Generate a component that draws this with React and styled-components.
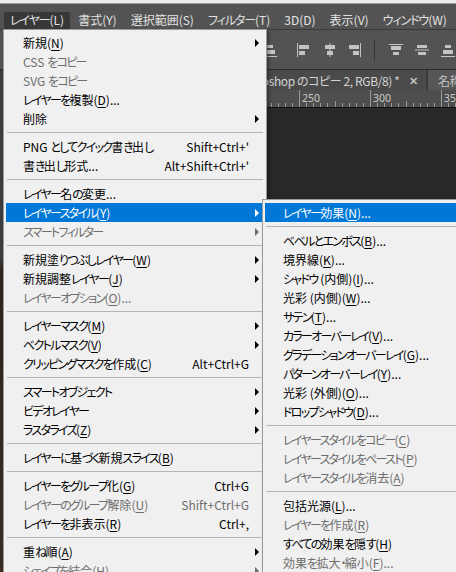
import React from 'react';
import styled, { createGlobalStyle } from 'styled-components';

const GlobalStyle = createGlobalStyle`
  html, body {
    margin: 0;
    padding: 0;
    background: #282828;
    overflow: hidden;
  }
  * { box-sizing: border-box; }
`;

const UI_FONT = `"Noto Sans CJK JP", "Noto Sans", sans-serif`;

const Window = styled.div`
  position: relative;
  width: 456px;
  height: 572px;
  overflow: hidden;
  display: flex;
  flex-direction: column;
  background: #282828;
  font-family: ${UI_FONT};
  font-feature-settings: "palt" 1;
`;

const TopStrip = styled.div`
  height: 4px;
  flex: none;
  background: #ececec;
  border-bottom: 1px solid #9a9a9a;
`;

const MenuBar = styled.div`
  height: 25px;
  flex: none;
  display: flex;
  align-items: flex-end;
  gap: 2px;
  padding-left: 4px;
  background: #535353;
`;

const MenuBarItem = styled.div`
  height: 17px;
  padding: 0 6px;
  font-size: 12px;
  line-height: 16px;
  color: #e2e2e2;
  white-space: nowrap;
  border-radius: 2px 2px 0 0;
  background: ${({ $open }) => ($open ? '#383838' : 'transparent')};
`;

/* Meiryo UI kana are narrower than Noto's, so kana runs get squeezed */
const Kana = styled.span`
  letter-spacing: ${({ $ls }) => $ls}px;
`;

const OptionsBar = styled.div`
  height: 41px;
  flex: none;
  display: flex;
  align-items: center;
  padding-left: 262px;
  background: #535353;
  border-top: 1px solid #3a3a3a;
  border-bottom: 1px solid #2c2c2c;
`;

const ToolIcon = styled.div`
  width: 16px;
  height: 16px;
  margin-right: ${({ $gap }) => $gap}px;
  display: flex;
  color: #c4c4c4;
`;

const BarDivider = styled.div`
  width: 1px;
  height: 22px;
  margin-right: 13px;
  background: #343434;
`;

const Work = styled.div`
  flex: 1;
  display: flex;
  min-height: 0;
`;

const ToolStrip = styled.div`
  width: 3px;
  flex: none;
  background: linear-gradient(#3c3c3c 0, #3c3c3c 190px, #2d2520 200px, #3a2c22 100%);
`;

const DocArea = styled.div`
  flex: 1;
  display: flex;
  flex-direction: column;
  min-width: 0;
`;

const TabBar = styled.div`
  height: 20px;
  flex: none;
  display: flex;
  background: #3a3a3a;
`;

const Tab = styled.div`
  height: 20px;
  display: flex;
  align-items: center;
  justify-content: ${({ $end }) => ($end ? 'flex-end' : 'flex-start')};
  flex: ${({ $width }) => ($width ? `0 0 ${$width}px` : '1')};
  padding: ${({ $end }) => ($end ? '0 8px 0 10px' : '0 10px')};
  margin-right: ${({ $end }) => ($end ? '2px' : '0')};
  overflow: hidden;
  white-space: nowrap;
  font-size: 12px;
  letter-spacing: -0.4px;
  color: ${({ $active }) => ($active ? '#d4d4d4' : '#c2c2c2')};
  background: ${({ $active }) => ($active ? '#4a4a4a' : '#565656')};
`;

const TabClose = styled.span`
  margin-left: 10px;
  font-size: 11px;
  font-weight: 700;
  color: #bdbdbd;
  flex: none;
`;

const RulerBox = styled.div`
  height: 18px;
  flex: none;
  background: #4e4e4e;
  border-bottom: 1px solid #141414;
  display: flex;
`;

const Canvas = styled.div`
  flex: 1;
  background: #282828;
`;

const Menu = styled.div`
  position: absolute;
  left: ${({ $x }) => $x}px;
  top: ${({ $y }) => $y}px;
  width: ${({ $w }) => $w}px;
  padding: 3px 2px;
  background: #f0f0f0;
  border: 1px solid #9b9b9b;
  box-shadow: 2px 2px 3px rgba(0, 0, 0, 0.35);
  font-size: 12px;
`;

const Item = styled.div`
  height: 19px;
  display: flex;
  align-items: center;
  padding-left: ${({ $indent }) => $indent}px;
  white-space: nowrap;
  color: ${({ $active, $disabled }) => ($active ? '#ffffff' : $disabled ? '#6d6d6d' : '#000000')};
  background: ${({ $active }) => ($active ? '#0078d7' : 'transparent')};
`;

const Label = styled.span`
  flex: 1;
  line-height: 19px;

  u {
    text-decoration-thickness: 1px;
    text-underline-offset: 2px;
  }
`;

const Shortcut = styled.span`
  line-height: 19px;
`;

const ArrowCell = styled.span`
  width: 15px;
  flex: none;
  display: flex;
  justify-content: center;
`;

const Arrow = styled.span`
  width: 0;
  height: 0;
  border-top: 4px solid transparent;
  border-bottom: 4px solid transparent;
  border-left: 4px solid currentColor;
`;

const Separator = styled.div`
  height: 9px;
  display: flex;
  align-items: center;
  padding: 0 1px;

  &::after {
    content: '';
    flex: 1;
    height: 1px;
    background: #b4b4b4;
  }
`;

const mainItems = [
  { t: '新規(&N)', sub: true },
  { t: 'CSS をコピー', dis: true },
  { t: 'SVG をコピー', dis: true },
  { t: 'レイヤーを複製(&D)...' },
  { t: '削除', sub: true },
  '-',
  { t: 'PNG としてクイック書き出し', k: "Shift+Ctrl+'" },
  { t: '書き出し形式...', k: "Alt+Shift+Ctrl+'" },
  '-',
  { t: 'レイヤー名の変更...' },
  { t: 'レイヤースタイル(&Y)', sub: true, active: true },
  { t: 'スマートフィルター', sub: true, dis: true },
  '-',
  { t: '新規塗りつぶしレイヤー(&W)', sub: true },
  { t: '新規調整レイヤー(&J)', sub: true },
  { t: 'レイヤーオプション(&O)...', dis: true },
  '-',
  { t: 'レイヤーマスク(&M)', sub: true },
  { t: 'ベクトルマスク(&V)', sub: true },
  { t: 'クリッピングマスクを作成(&C)', k: 'Alt+Ctrl+G' },
  '-',
  { t: 'スマートオブジェクト', sub: true },
  { t: 'ビデオレイヤー', sub: true },
  { t: 'ラスタライズ(&Z)', sub: true },
  '-',
  { t: 'レイヤーに基づく新規スライス(&B)' },
  '-',
  { t: 'レイヤーをグループ化(&G)', k: 'Ctrl+G' },
  { t: 'レイヤーのグループ解除(&U)', k: 'Shift+Ctrl+G', dis: true },
  { t: 'レイヤーを非表示(&R)', k: 'Ctrl+,' },
  '-',
  { t: '重ね順(&A)', sub: true },
  { t: 'シェイプを結合(&H)', sub: true, dis: true },
];

const styleItems = [
  { t: 'レイヤー効果(&N)...', active: true },
  '-',
  { t: 'ベベルとエンボス(&B)...' },
  { t: '境界線(&K)...' },
  { t: 'シャドウ (内側)(&I)...' },
  { t: '光彩 (内側)(&W)...' },
  { t: 'サテン(&T)...' },
  { t: 'カラーオーバーレイ(&V)...' },
  { t: 'グラデーションオーバーレイ(&G)...' },
  { t: 'パターンオーバーレイ(&Y)...' },
  { t: '光彩 (外側)(&O)...' },
  { t: 'ドロップシャドウ(&D)...' },
  '-',
  { t: 'レイヤースタイルをコピー(&C)', dis: true },
  { t: 'レイヤースタイルをペースト(&P)', dis: true },
  { t: 'レイヤースタイルを消去(&A)', dis: true },
  '-',
  { t: '包括光源(&L)...' },
  { t: 'レイヤーを作成(&R)', dis: true },
  { t: 'すべての効果を隠す(&H)' },
  { t: '効果を拡大・縮小(&F)...', dis: true },
];

const JP = ({ text, ls = -1.7 }) =>
  text
    .split(/([\u3040-\u30ff]+)/)
    .map((part, i) =>
      /[\u3040-\u30ff]/.test(part) ? (
        <Kana key={i} $ls={ls}>
          {part}
        </Kana>
      ) : (
        part
      )
    );

// "&X" marks the mnemonic letter
const Mnemonic = ({ text }) => {
  const i = text.indexOf('&');
  if (i < 0) return <JP text={text} />;
  return (
    <>
      <JP text={text.slice(0, i)} />
      <u>{text[i + 1]}</u>
      {text.slice(i + 2)}
    </>
  );
};

const MenuList = ({ items, x, y, w, indent }) => (
  <Menu $x={x} $y={y} $w={w}>
    {items.map((it, i) =>
      it === '-' ? (
        <Separator key={i} />
      ) : (
        <Item key={i} $indent={indent} $active={it.active} $disabled={it.dis}>
          <Label>
            <Mnemonic text={it.t} />
          </Label>
          {it.k && <Shortcut>{it.k}</Shortcut>}
          <ArrowCell>{it.sub && <Arrow />}</ArrowCell>
        </Item>
      )
    )}
  </Menu>
);

const AlignIcon = ({ kind }) => {
  const shapes = {
    left: (
      <>
        <rect x="1" y="1" width="1" height="14" />
        <rect x="3" y="3" width="10" height="4" />
        <rect x="3" y="9" width="6" height="4" />
      </>
    ),
    center: (
      <>
        <rect x="7.5" y="1" width="1" height="14" />
        <rect x="3" y="3" width="10" height="4" />
        <rect x="5" y="9" width="6" height="4" />
      </>
    ),
    right: (
      <>
        <rect x="14" y="1" width="1" height="14" />
        <rect x="3" y="3" width="10" height="4" />
        <rect x="7" y="9" width="6" height="4" />
      </>
    ),
    top: (
      <>
        <rect x="1" y="2" width="14" height="1" />
        <rect x="3" y="4" width="10" height="4" />
        <rect x="5" y="10" width="6" height="3" />
      </>
    ),
    middle: (
      <>
        <rect x="1" y="7.5" width="14" height="1" />
        <rect x="3" y="3" width="10" height="3" />
        <rect x="4" y="10" width="8" height="3" />
      </>
    ),
    bottom: (
      <>
        <rect x="1" y="14" width="14" height="1" />
        <rect x="5" y="3" width="6" height="3" />
        <rect x="3" y="8" width="10" height="4" />
      </>
    ),
  };
  return (
    <svg width="16" height="16" viewBox="0 0 16 16" fill="currentColor">
      {shapes[kind]}
    </svg>
  );
};

const Ruler = () => {
  const ticks = [];
  for (let i = 0; i < 70; i++) {
    const x = 12 + i * 7.1;
    const major = i % 10 === 0;
    const mid = i % 5 === 0;
    ticks.push(
      <rect key={i} x={Math.round(x)} y={major ? 0 : mid ? 11 : 13} width="1" height={major ? 17 : mid ? 6 : 4} />
    );
  }
  const labels = [50, 100, 150, 200, 250, 300, 350].map((n, i) => (
    <text key={n} x={12 + i * 71 + 3} y="12" fontSize="10.5" fill="#c8c8c8" fontFamily='"Noto Sans", sans-serif'>
      {n}
    </text>
  ));
  return (
    <svg width="453" height="17" fill="#9a9a9a">
      {ticks}
      {labels}
    </svg>
  );
};

const barMenus = ['レイヤー(L)', '書式(Y)', '選択範囲(S)', 'フィルター(T)', '3D(D)', '表示(V)', 'ウィンドウ(W)'];

export default function App() {
  return (
    <>
      <GlobalStyle />
      <Window>
        <TopStrip />
        <MenuBar>
          {barMenus.map((m, i) => (
            <MenuBarItem key={m} $open={i === 0}>
              <JP text={m} ls={-1.1} />
            </MenuBarItem>
          ))}
        </MenuBar>
        <OptionsBar>
          <ToolIcon $gap={18}><AlignIcon kind="bottom" /></ToolIcon>
          <ToolIcon $gap={10}><AlignIcon kind="left" /></ToolIcon>
          <ToolIcon $gap={8}><AlignIcon kind="center" /></ToolIcon>
          <ToolIcon $gap={12}><AlignIcon kind="right" /></ToolIcon>
          <BarDivider />
          <ToolIcon $gap={10}><AlignIcon kind="top" /></ToolIcon>
          <ToolIcon $gap={10}><AlignIcon kind="middle" /></ToolIcon>
          <ToolIcon $gap={0}><AlignIcon kind="bottom" /></ToolIcon>
        </OptionsBar>
        <Work>
          <ToolStrip />
          <DocArea>
            <TabBar>
              <Tab $active $end $width={423}>
                名称未設定 1 @ 66.7% (Photoshop のコピー 2, RGB/8) *
                <TabClose>✕</TabClose>
              </Tab>
              <Tab>名称未設定 2 @ 66.7%</Tab>
            </TabBar>
            <RulerBox>
              <Ruler />
            </RulerBox>
            <Canvas />
          </DocArea>
        </Work>
        <MenuList items={mainItems} x={3} y={29} w={264} indent={17} />
        <MenuList items={styleItems} x={262} y={199} w={230} indent={18} />
      </Window>
    </>
  );
}
